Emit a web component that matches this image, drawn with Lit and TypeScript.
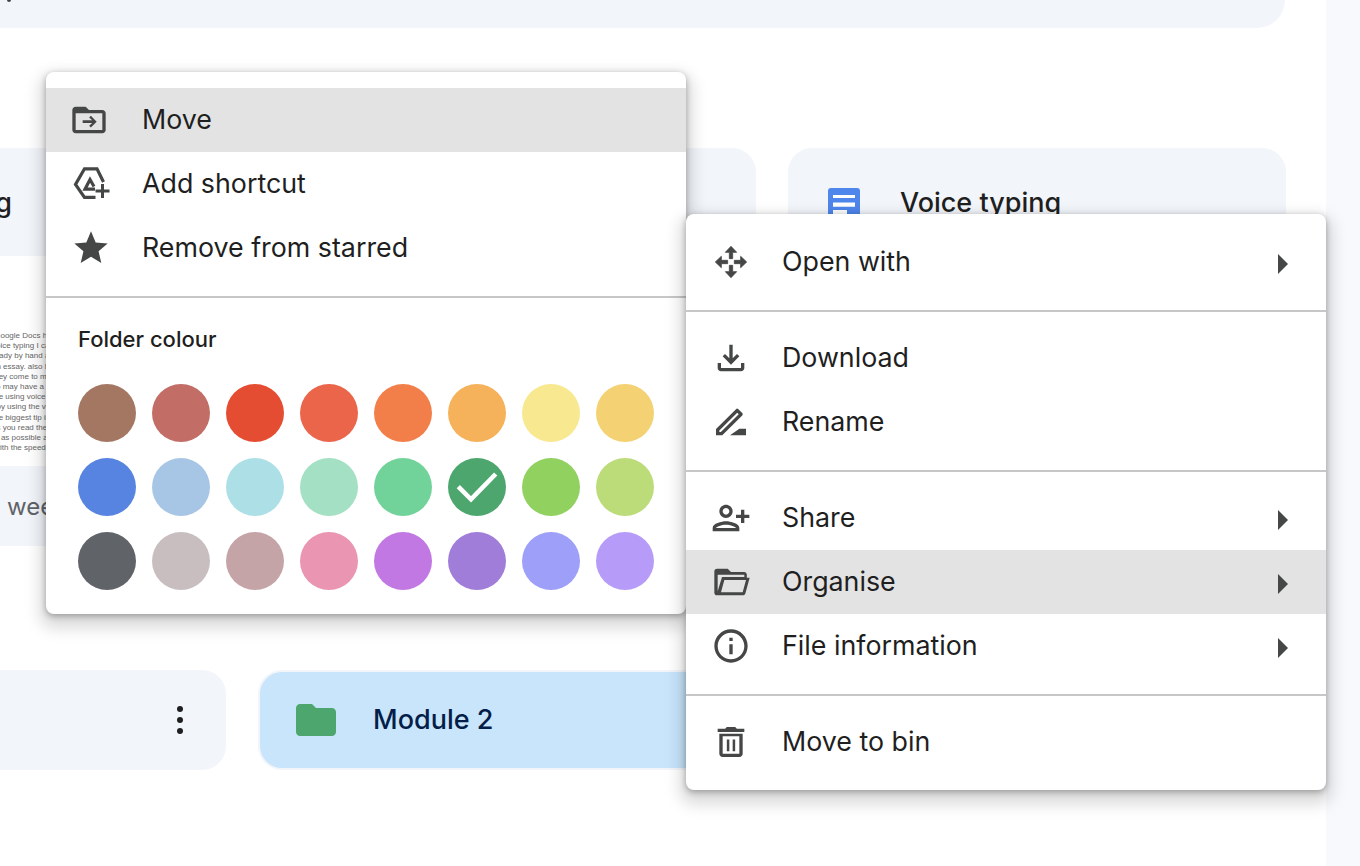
import { LitElement, html, css, svg } from "lit";
import { customElement } from "lit/decorators.js";

const ic = (body: unknown) => html`<svg class="ic" viewBox="0 0 24 24" fill="currentColor">${body}</svg>`;
const arrowUp = "M12 2.6 15.4 6.2H13V10H11V6.2H8.6Z";
const icons: Record<string, unknown> = {
  move: ic(svg`<path transform="translate(-1.2 0)" fill-rule="evenodd" d="M20 6h-8l-2-2H4c-1.1 0-2 .9-2 2v12c0 1.1.9 2 2 2h16c1.1 0 2-.9 2-2V8c0-1.1-.9-2-2-2zm0 12H4V8h16v10z"/><path d="M11.9 9.5 10.9 10.5 12.7 12.2H7V13.8H12.7L10.9 15.5 11.9 16.5 15.4 13Z"/>`),
  shortcut: html`<svg class="ic" viewBox="0 0 40 40" fill="none" stroke="currentColor" stroke-width="3.2"><path d="M24.5 33.4H13.5L4.5 20.5 13.5 4.8H26L32.5 18"/><path d="M23 22.5 19 15.5 14 25.2H24"/><path stroke-width="3" d="M31.5 20V34M24.5 27H38.5"/></svg>`,
  star: ic(svg`<path d="M12 17.27L18.18 21l-1.64-7.03L22 9.24l-7.19-.61L12 2 9.19 8.63 2 9.24l5.46 4.73L5.82 21z"/>`),
  open: ic(svg`<g stroke="currentColor" stroke-width=".5" stroke-linejoin="round"><path d="${arrowUp}"/><path transform="rotate(90 12 12)" d="${arrowUp}"/><path transform="rotate(180 12 12)" d="${arrowUp}"/><path transform="rotate(270 12 12)" d="${arrowUp}"/></g>`),
  download: ic(svg`<path d="M18 15v3H6v-3H4v3c0 1.1.9 2 2 2h12c1.1 0 2-.9 2-2v-3h-2zm-1-4l-1.41-1.41L13 12.17V4h-2v8.17L8.41 9.59 7 11l5 5 5-5z"/>`),
  rename: ic(svg`<path fill-rule="evenodd" d="M3 16.25 15 4.29a1 1 0 0 1 1.41 0l2.34 2.34c.39.37.39 1.02 0 1.41L6.75 20H3zM5 17.08V18h.92L16.65 7.34l-.92-.92z"/><path d="M11.4 20 17 16H21V20Z"/>`),
  share: ic(svg`<path transform="translate(24 0) scale(-1 1)" d="M15 12c2.21 0 4-1.79 4-4s-1.79-4-4-4-4 1.79-4 4 1.79 4 4 4zm0-6c1.1 0 2 .9 2 2s-.9 2-2 2-2-.9-2-2 .9-2 2-2zm0 8c-2.67 0-8 1.34-8 4v2h16v-2c0-2.66-5.33-4-8-4zm-6 4c.22-.72 3.31-2 6-2 2.7 0 5.8 1.29 6 2H9zm-3-3v-3h3v-2H6V7H4v3H1v2h3v3h2z"/>`),
  organise: ic(svg`<path fill-rule="evenodd" d="M3.6 4H10l2 2h7.8c1 0 1.7.7 1.7 1.7V9.4H23.2L20.7 18.6c-.2.8-.8 1.4-1.7 1.4H3.6C2.7 20 2 19.3 2 18.4V5.6C2 4.7 2.7 4 3.6 4zM4 7.6H20V9H6.6L4 17.5zM8 10.8H21L19 18.2H6z"/>`),
  info: ic(svg`<path d="M11 7h2v2h-2zm0 4h2v6h-2zm1-9C6.48 2 2 6.48 2 12s4.48 10 10 10 10-4.48 10-10S17.52 2 12 2zm0 18c-4.41 0-8-3.59-8-8s3.59-8 8-8 8 3.59 8 8-3.59 8-8 8z"/>`),
  bin: ic(svg`<path d="M9.5 3h5l1 1H20v2H4V4h4.5z"/><path fill-rule="evenodd" d="M5 7h14v12c0 1.1-.9 2-2 2H7c-1.1 0-2-.9-2-2zM7 8.5V19h10V8.5z"/><path d="M9.5 10.5H11v7H9.5zM13 10.5h1.5v7H13z"/>`),
};

const swatches = [
  "#a47763", "#c26d65", "#e54d33", "#ea654a", "#f27f4a", "#f5b25a", "#f8e88f", "#f4d273",
  "#5784e0", "#a7c6e6", "#ade0e6", "#a4e0c3", "#72d39a", "#4da66d", "#91d15f", "#bcdc7a",
  "#606368", "#c8bebf", "#c5a4a8", "#ea95b1", "#c178e3", "#a07dd9", "#9d9ff9", "#b69cf8",
];

const previewLines = [
  " Google Docs has", "voice typing I can", "ready by hand and", "an essay. also I find", "they come to mind", "so may have a little",
  "the using voice is", "  by using the voice", "the biggest tip is", "as you read the", "    as possible as", " with the speed of",
];

type Item = { icon: string; label: string; arrow?: boolean; active?: boolean };

@customElement("app-root")
export class AppRoot extends LitElement {
  static styles = css`
    :host {
      display: block;
      width: 1360px;
      height: 866px;
      overflow: hidden;
      position: relative;
      background: #f8f9fc;
      font-family: Inter, Roboto, "Liberation Sans", sans-serif;
      color: #1f1f1f;
    }
    .main {
      width: 1326px;
      height: 866px;
      background: #fff;
      overflow: hidden;
    }
    .top {
      width: 1285px;
      height: 28px;
      box-sizing: border-box;
      padding-left: 7px;
      background: #f2f5fa;
      border-bottom-right-radius: 34px;
    }
    .top i {
      display: block;
      width: 4px;
      height: 1.5px;
      background: #444;
      border-radius: 0 0 2px 2px;
    }
    .grid {
      margin: 0 0 0 -272px;
      display: grid;
      grid-template-columns: repeat(3, 498px);
      column-gap: 32px;
      width: 1558px;
    }
    .files { margin-top: 120px; height: 398px; }
    .folders { margin-top: 124px; }
    .card {
      background: #f2f5fa;
      border-radius: 24px;
      height: 398px;
      display: flex;
      flex-direction: column;
      overflow: hidden;
    }
    .head {
      height: 108px;
      flex: none;
      display: flex;
      align-items: center;
      padding-left: 40px;
      gap: 40px;
      font-size: 27px;
      font-weight: 500;
      color: #1f1f1f;
      white-space: nowrap;
    }
    .head.plain { padding-left: 112px; }
    .doc { width: 32px; height: 28px; flex: none; display: block; }
    .preview {
      flex: 1;
      background: #fff;
      padding: 75px 0 0 272px;
      overflow: hidden;
      font: 8px/10.2px "Liberation Sans", Arial, sans-serif;
      color: #666;
      white-space: pre;
    }
    .preview div { margin-left: -8px; }
    .foot {
      height: 80px;
      flex: none;
      display: flex;
      align-items: center;
      padding-left: 279px;
      font-size: 24px;
      color: #5f6368;
      white-space: nowrap;
    }
    .folder {
      height: 100px;
      box-sizing: border-box;
      border-radius: 24px;
      background: #f2f5fa;
      display: flex;
      align-items: center;
      justify-content: flex-end;
      padding-right: 22px;
    }
    .more { width: 48px; height: 48px; display: block; }
    .folder.sel {
      background: #c9e5fb;
      border: 2px solid #f2f5fa;
      justify-content: flex-start;
      padding: 0 0 0 32px;
      gap: 33px;
      font-size: 27px;
      font-weight: 500;
      color: #041e49;
      white-space: nowrap;
    }
    .folder.sel span { margin-bottom: 2px; }
    .fold { width: 48px; height: 48px; display: block; color: #4da66d; flex: none; }

    .menu {
      position: absolute;
      width: 640px;
      box-sizing: border-box;
      padding: 16px 0;
      background: #fff;
      border-radius: 8px;
      box-shadow: 0 8px 16px 6px rgba(0, 0, 0, 0.15), 0 2px 6px rgba(0, 0, 0, 0.3);
    }
    .left { left: 46px; top: 72px; height: 542px; }
    .right { left: 686px; top: 214px; height: 576px; z-index: 1; }
    .item {
      height: 64px;
      display: flex;
      align-items: center;
      padding-left: 25px;
      font-size: 26.8px;
      color: #1f1f1f;
      white-space: nowrap;
    }
    .item > span:not(.arrow) { margin-bottom: 2px; }
    .item.active { background: #e3e3e3; }
    .ic { width: 40px; height: 40px; display: block; flex: none; color: #444746; margin-right: 31px; }
    .arrow {
      margin-left: auto;
      margin-right: 38px;
      margin-top: 4px;
      width: 0;
      height: 0;
      border-left: 10px solid #444746;
      border-top: 10px solid transparent;
      border-bottom: 10px solid transparent;
    }
    hr {
      border: 0;
      height: 2px;
      background: #c7c7c7;
      margin: 16px 0 14px;
      padding: 0;
    }
    .title {
      padding: 0 0 0 32px;
      margin-top: 27px;
      font-size: 22px;
      line-height: 28px;
      font-weight: 500;
      color: #1f1f1f;
    }
    .swatches {
      margin: 31px 0 0 32px;
      display: grid;
      grid-template-columns: repeat(8, 58px);
      gap: 16px;
    }
    .swatch { width: 58px; height: 58px; border-radius: 50%; display: block; }
    .swatch svg { display: block; }
  `;

  private item(i: Item) {
    return html`<div class="item ${i.active ? "active" : ""}">
      ${icons[i.icon]}<span>${i.label}</span>${i.arrow ? html`<span class="arrow"></span>` : ""}
    </div>`;
  }

  private group(items: Item[]) {
    return items.map((i) => this.item(i));
  }

  render() {
    return html`
      <div class="main">
        <div class="top"><i></i></div>
        <div class="grid files">
          <div class="card">
            <div class="head plain"><span>Essay writing</span></div>
            <div class="preview">${previewLines.map((l) => html`<div>${l}</div>`)}</div>
            <div class="foot">weeks ago</div>
          </div>
          <div class="card"></div>
          <div class="card">
            <div class="head">
              <svg class="doc" viewBox="0 0 32 28">
                <rect width="32" height="40" rx="3" fill="#4f86ec"></rect>
                <path fill="#fff" d="M5 7h22v3H5zM5 14.5h22v4.2H5zM5 22h14v6H5z"></path>
              </svg>
              <span>Voice typing</span>
            </div>
          </div>
        </div>
        <div class="grid folders">
          <div class="folder">
            <svg class="more" viewBox="0 0 48 48" fill="#1f1f1f">
              <circle cx="24" cy="13" r="3"></circle><circle cx="24" cy="24" r="3"></circle><circle cx="24" cy="35" r="3"></circle>
            </svg>
          </div>
          <div class="folder sel">
            <svg class="fold" viewBox="0 0 24 24" fill="currentColor"><path d="M10 4H4c-1.1 0-1.99.9-1.99 2L2 18c0 1.1.9 2 2 2h16c1.1 0 2-.9 2-2V8c0-1.1-.9-2-2-2h-8l-2-2z"></path></svg>
            <span>Module 2</span>
          </div>
          <div class="folder"></div>
        </div>
      </div>

      <div class="menu left">
        ${this.group([
          { icon: "move", label: "Move", active: true },
          { icon: "shortcut", label: "Add shortcut" },
          { icon: "star", label: "Remove from starred" },
        ])}
        <hr />
        <div class="title">Folder colour</div>
        <div class="swatches">
          ${swatches.map(
            (c, i) => html`<span class="swatch" style="background:${c}">${i === 13
              ? html`<svg width="58" height="58" viewBox="0 0 58 58" fill="none" stroke="#fff" stroke-width="4.6"><path d="M10.3 28.7 23 41.3 47.7 16"></path></svg>`
              : ""}</span>`,
          )}
        </div>
      </div>

      <div class="menu right">
        ${this.group([{ icon: "open", label: "Open with", arrow: true }])}
        <hr />
        ${this.group([
          { icon: "download", label: "Download" },
          { icon: "rename", label: "Rename" },
        ])}
        <hr />
        ${this.group([
          { icon: "share", label: "Share", arrow: true },
          { icon: "organise", label: "Organise", arrow: true, active: true },
          { icon: "info", label: "File information", arrow: true },
        ])}
        <hr />
        ${this.group([{ icon: "bin", label: "Move to bin" }])}
      </div>
    `;
  }
}
